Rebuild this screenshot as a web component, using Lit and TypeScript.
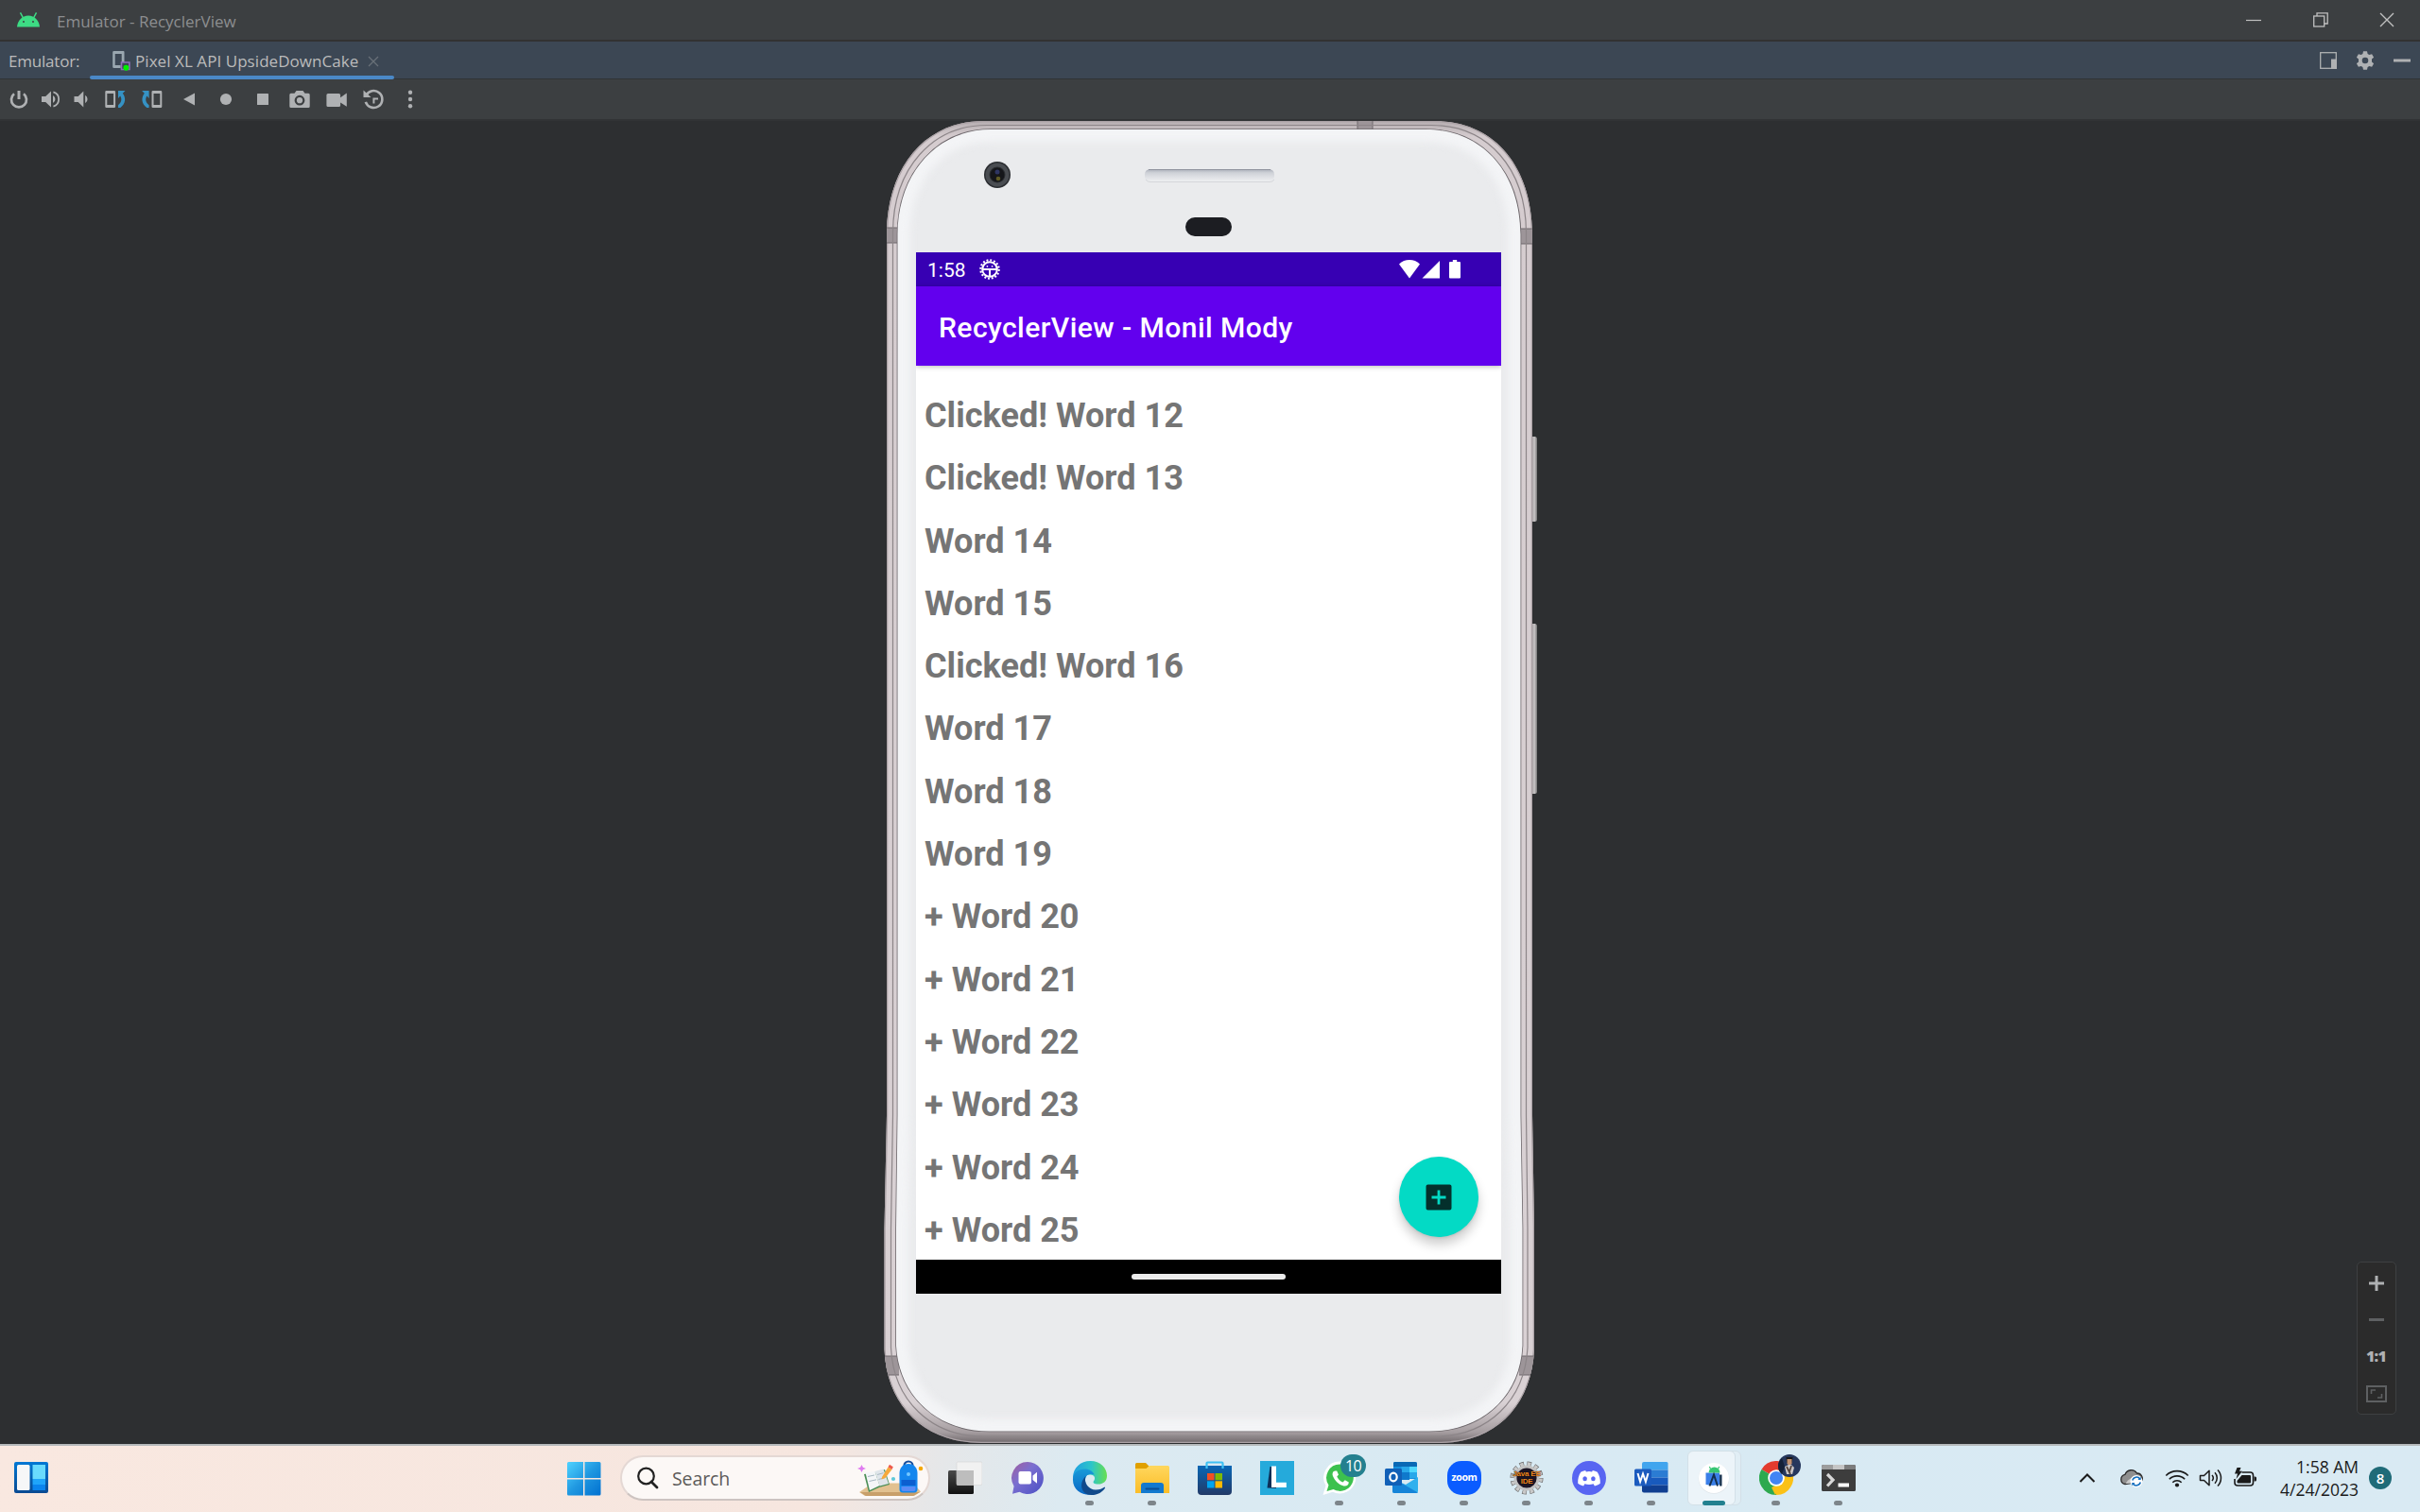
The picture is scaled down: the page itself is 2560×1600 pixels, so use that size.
import { LitElement, html, css, svg, TemplateResult } from "lit";
import { customElement, property } from "lit/decorators.js";

/** Wraps svg content in a box with its own coordinate system. */
const icon = (w: number, h: number, body: unknown) =>
  html`<svg width=${w} height=${h} viewBox="0 0 ${w} ${h}" fill="none">${body}</svg>`;

const G = "#afb1b3";
const BLUE = "#3592c4";

/* ---------- emulator toolbar ---------- */
const power = icon(24, 24, svg`<path d="M7 6.2a8 8 0 1 0 10 0" stroke=${G} stroke-width="2.7"/><path d="M12 3v9" stroke=${G} stroke-width="3"/>`);
const volUp = icon(24, 24, svg`<path d="M3 9h4.200l5.800-5.400v16.800L7.200 15H3z" fill=${G}/><path d="M15 8a4.500 4.500 0 0 1 0 8z" fill=${G}/><path d="M15.400 4.400a7.900 7.900 0 0 1 0 15.200" stroke=${G} stroke-width="1.800"/>`);
const volDown = icon(24, 24, svg`<path d="M4.500 9h4.200l5.600-5.600v17.200L8.700 15H4.500z" fill=${G}/><path d="M16.100 7.800a4.800 4.800 0 0 1 0 8.400z" fill=${G}/>`);
const rotLeft = icon(24, 24, svg`<path fill-rule="evenodd" d="M2.500 3h8.400a1.200 1.200 0 0 1 1.200 1.200v15.600a1.200 1.200 0 0 1-1.200 1.200H2.500a1.200 1.200 0 0 1-1.200-1.200V4.200A1.200 1.200 0 0 1 2.500 3zM3.300 6v12h6.800V6z" fill=${G}/><path d="M15 3h7.500l-2.700 2.800c3.600 4.400 3.300 11-2.500 15.200H15v-2.800c3.600-2.800 4.200-6.700 2.200-9.700L15 11z" fill=${BLUE}/>`);
const rotRight = icon(24, 24, svg`<g transform="translate(23.600 0) scale(-1 1)"><path fill-rule="evenodd" d="M2.500 3h8.400a1.200 1.200 0 0 1 1.200 1.200v15.600a1.200 1.200 0 0 1-1.200 1.200H2.500a1.200 1.200 0 0 1-1.200-1.200V4.200A1.200 1.200 0 0 1 2.500 3zM3.300 6v12h6.800V6z" fill=${G}/><path d="M15 3h7.500l-2.700 2.800c3.600 4.400 3.300 11-2.500 15.200H15v-2.800c3.600-2.800 4.200-6.700 2.200-9.700L15 11z" fill=${BLUE}/></g>`);
const back = icon(24, 24, svg`<path d="M6 12 18 5.500v13z" fill=${G}/>`);
const home = icon(24, 24, svg`<circle cx="12" cy="12" r="6.100" fill=${G}/>`);
const overview = icon(24, 24, svg`<rect x="6" y="6" width="12" height="12" rx=".6" fill=${G}/>`);
const camera = icon(24, 24, svg`<path fill-rule="evenodd" d="M8.500 3h7l2 2.800h3.700a1.500 1.500 0 0 1 1.500 1.500v12.200A1.500 1.500 0 0 1 21.200 21H2.800a1.500 1.500 0 0 1-1.500-1.500V7.300a1.500 1.500 0 0 1 1.500-1.500h3.700zM12 7.800a5.400 5.400 0 1 0 0 10.800 5.400 5.400 0 0 0 0-10.800z" fill=${G}/><circle cx="12" cy="13.200" r="3.100" fill=${G}/>`);
const video = icon(24, 24, svg`<path d="M3 6h11.500a1.600 1.600 0 0 1 1.600 1.600v2.600L22.800 5.400v14.400l-6.700-4.400v3a1.600 1.600 0 0 1-1.600 1.600H3a1.600 1.600 0 0 1-1.600-1.600V7.600A1.600 1.600 0 0 1 3 6z" fill=${G}/>`);
const replay = icon(24, 24, svg`<path d="M4.200 8.200a9 9 0 1 1-.4 6.600" stroke=${G} stroke-width="2.600"/><path d="M1.500 2.500V10h8z" fill=${G}/><path d="M17 11.500h-4.600v5" stroke=${G} stroke-width="2"/>`);
const kebab = icon(24, 24, svg`${[4.7, 12, 19.3].map((y) => svg`<circle cx="12" cy=${y} r="2.200" fill=${G}/>`)}`);

/* ---------- window chrome ---------- */
const androidHead = icon(26, 18, svg`<path d="M1 16.500C1.600 9.500 6.500 4.500 13 4.500s11.400 5 12 12z" fill="#3ddc84"/><path d="m7.500 7-3-5.600M18.500 7l3-5.600" stroke="#3ddc84" stroke-width="1.500"/><circle cx="8" cy="11" r="1" fill="#3c3f41"/><circle cx="18" cy="11" r="1" fill="#3c3f41"/>`);
const deviceIcon = icon(20, 22, svg`<path fill-rule="evenodd" d="M1.500 1h10a1 1 0 0 1 1 1v11H9.700V4H2.700v12h6v3H1.500a1.300 1.300 0 0 1-1.300-1.300V2.200A1.300 1.300 0 0 1 1.500 1z" fill="#9aa7b0"/><path d="M9.500 13h8.400v7.500H9.500z" stroke="#8f6fb8" stroke-width="1.600"/><circle cx="14.400" cy="18.800" r="3" fill="#00f000"/>`);
const closeTab = icon(12, 12, svg`<path d="m1 1 10 10M11 1 1 11" stroke="#697078" stroke-width="1.300"/>`);
const winMin = icon(16, 16, svg`<path d="M0 8.500h16" stroke="#c0c0c0" stroke-width="1.200"/>`);
const winMax = icon(16, 16, svg`<rect x=".7" y="4" width="11" height="11" stroke="#c0c0c0" stroke-width="1.300"/><path d="M4 4V.9h11.200V12H12" stroke="#c0c0c0" stroke-width="1.300"/>`);
const winClose = icon(16, 16, svg`<path d="m1 1 14 14M15 1 1 15" stroke="#c0c0c0" stroke-width="1.400"/>`);
const paneMode = icon(18, 18, svg`<rect x=".7" y=".7" width="16.600" height="16.600" stroke=${G} stroke-width="1.300"/><path d="M12 7.500h6V18h-6z" fill=${G}/>`);
const gear = icon(20, 20, svg`<path fill-rule="evenodd" d="m8 .3h4l.6 2.800 1.700 1 2.800-.9 2 3.500-2.100 1.900v2.800l2.100 1.900-2 3.500-2.800-.9-1.700 1-.6 2.800H8l-.6-2.800-1.700-1-2.800.9-2-3.500L3 11.400V8.600L.9 6.700l2-3.500 2.800.9 1.700-1zM10 6.700a3.300 3.300 0 1 0 0 6.600 3.300 3.300 0 0 0 0-6.600z" fill=${G}/>`);
const hide = icon(18, 18, svg`<path d="M0 9h18" stroke=${G} stroke-width="3"/>`);

/* ---------- zoom panel ---------- */
const zoomIn = icon(16, 16, svg`<path d="M8 0v16M0 8h16" stroke=${G} stroke-width="3"/>`);
const zoomOut = icon(16, 16, svg`<path d="M0 8.500h16" stroke="#5e6062" stroke-width="3"/>`);
const zoomFit = icon(22, 18, svg`<rect x="1" y="1" width="20" height="16" stroke="#5e6062" stroke-width="2"/><path d="M5.500 9V5h4.500M16.500 9v4H12" stroke="#5e6062" stroke-width="1.600"/>`);

/* ---------- taskbar ---------- */
const widgets = icon(36, 34, svg`<defs><linearGradient id="wg" x1="0" y1="0" x2="0" y2="1"><stop stop-color="#0078d4"/><stop offset="1" stop-color="#0a4a92"/></linearGradient></defs><rect width="36" height="33" rx="2" fill="url(#wg)"/><rect x="3" y="3" width="13.500" height="27" rx="1.500" fill="#f6f7f8"/><path d="M19.500 3H33v15H19.500z" fill="#6adbfd"/><path d="M19.500 18H33v6H19.500z" fill="#1fa5fb"/><path d="M19.500 24H33v6H19.500z" fill="#0a84ee"/>`);
const start = icon(36, 36, svg`<defs><linearGradient id="st" gradientUnits="userSpaceOnUse" x1="0" y1="0" x2="36" y2="36"><stop stop-color="#4fd2ff"/><stop offset=".5" stop-color="#1f97e0"/><stop offset="1" stop-color="#006fd0"/></linearGradient></defs><path d="M1.500 0H17v17H0V1.500A1.500 1.500 0 0 1 1.500 0zM18.500 0H34A1.500 1.500 0 0 1 35.500 1.500V17h-17zM0 18.500h17v17H1.500A1.500 1.500 0 0 1 0 34zM18.500 18.500h17V34a1.500 1.500 0 0 1-1.500 1.500H18.500z" fill="url(#st)"/>`);
const magnifier = icon(24, 24, svg`<circle cx="10.500" cy="10" r="8.300" stroke="#222" stroke-width="2.200"/><path d="m16 16 6 6" stroke="#222" stroke-width="2.800" stroke-linecap="round"/>`);
const doodle = icon(70, 38, svg`<path d="M2 34 16 24.500h43l8 9-7 4.500H8z" fill="#e2c190"/><path d="M3 34h63l-7 4H9z" fill="#c89f6a"/><path d="m4.500 5 1.400 2.700L9 9l-3.100 1.300L4.500 13l-1.400-2.700L0 9l3.100-1.300z" fill="#e07bf0"/><path d="m7 15 11-2 11-3 5 16-11 3-11 5z" fill="#4c8f57"/><path d="m8.500 13.500 10-1.500 5 15-10.500 5z" fill="#f4f6f8"/><path d="m18.500 12 9-2.500 5.500 15.500-9.500 2.500z" fill="#dfe5ea"/><path d="m11 17.500 7-1.500M12.500 22.500l7.500-1.700M21 15.500l6.500-1.800M22.500 20.500l6.500-1.800" stroke="#a7b8c2"/><path d="M26 18 32.500 7.500l4 2.500L29.500 19l-4 1.500z" fill="#f6a93b"/><path d="m32.500 7.500 1.500-2.800 3.800 2.600L36.500 10z" fill="#ee5a4a"/><circle cx="38" cy="20" r="2.100" fill="#5fc9d8"/><circle cx="67" cy="9" r="2.300" fill="#f5a800"/><path d="M49.500 6a4.500 4.500 0 0 1 9 0" stroke="#174f9e" stroke-width="2.200"/><path d="M44.500 14c0-6 4-10 9.500-10s9.500 4 9.500 10v17c0 2-1 3.500-3.500 3.500H48c-2.500 0-3.500-1.500-3.500-3.500z" fill="#1486ee"/><path d="M46.500 21h15v6h-15z" fill="#0b5fd0"/><path d="M46.500 28h15v3a2 2 0 0 1-2 2h-11a2 2 0 0 1-2-2z" fill="#5b8cf6"/><circle cx="54" cy="15" r="2" fill="#73c8ff"/>`);
const taskView = icon(36, 36, svg`<defs><linearGradient id="tv" x1="0" y1="0" x2="0" y2="1"><stop stop-color="#4a4a4a"/><stop offset="1" stop-color="#111"/></linearGradient></defs><rect x="0" y="10" width="27" height="25" rx="1.500" fill="url(#tv)"/><rect x="9" y="1" width="27" height="24.500" rx="1.500" fill="#f1f1f1" stroke="#d5d5d5" stroke-width=".6"/><path d="M9 10h18v15.500H9z" fill="#bdbdbd"/>`);
const chat = icon(36, 36, svg`<defs><linearGradient id="ch" x1="0" y1="0" x2="1" y2="1"><stop stop-color="#a25e9e"/><stop offset=".4" stop-color="#7b6fd0"/><stop offset="1" stop-color="#4a4fc4"/></linearGradient></defs><path d="M18 1a17 17 0 1 1-8.500 31.800L2 34.800l1.600-8A17 17 0 0 1 18 1z" fill="url(#ch)"/><rect x="8.500" y="11" width="13.500" height="13.500" rx="2" fill="#fff"/><path d="m23.500 15.500 4.500-3.700v12l-4.500-3.700z" fill="#fff"/>`);
const edge = icon(38, 38, svg`<defs><linearGradient id="e1" x1="0" y1=".3" x2="1" y2=".3"><stop stop-color="#1f9fe2"/><stop offset=".55" stop-color="#2cc5c9"/><stop offset="1" stop-color="#68df4f"/></linearGradient><linearGradient id="e2" x1="0" y1="0" x2="0" y2="1"><stop stop-color="#189ad8"/><stop offset="1" stop-color="#0a67c5"/></linearGradient></defs><path d="M1 19C1 8 9 1 19.500 1 30 1 37 8.500 37 16.500c0 6.500-4.500 9-9 9-4.800 0-6.300-1.700-5-3.300 2-2.300 1.500-6.700-4-6.700z" fill="url(#e1)"/><path d="M1 19.500C1.500 13 7 9.500 13.500 9.500c5 0 8.500 2.600 10.200 6-7-2.500-9.700 2-9.700 6.500 0 8 8 14 14.500 12C18 40.500 0 35.500 1 19.500z" fill="url(#e2)"/><path d="M14.500 17c-2.500 7 3.500 14.500 10.500 14.500 4.500 0 7-1.200 9.200-2.700.7-.4 1.100.2.700.9-2.500 4-7.500 7.300-14.400 7.300C10 37 6.500 25 14.500 17z" fill="#114a8b"/>`);
const explorer = icon(38, 36, svg`<defs><linearGradient id="fx" x1="0" y1="0" x2="0" y2="1"><stop stop-color="#ffd75e"/><stop offset="1" stop-color="#fbbd27"/></linearGradient></defs><path d="M1 3.500A1.500 1.500 0 0 1 2.500 2H12l3.500 3.500V11H1z" fill="#e0a000"/><path d="M1 8h11.500L16 5h19.500A1.500 1.500 0 0 1 37 6.500V34H1z" fill="url(#fx)"/><path d="M7 34v-8a3 3 0 0 1 3-3h18a3 3 0 0 1 3 3v8z" fill="#1379cf"/><path d="M12.500 29.500h13" stroke="#0b4f94" stroke-width="2" stroke-linecap="round"/>`);
const store = icon(36, 36, svg`<defs><linearGradient id="ms" x1="0" y1="0" x2="0" y2="1"><stop stop-color="#0967b5"/><stop offset="1" stop-color="#223a68"/></linearGradient></defs><path d="M0 5h36v27a4 4 0 0 1-4 4H4a4 4 0 0 1-4-4z" fill="url(#ms)"/><path d="M9.500 8V2.500a1 1 0 0 1 1-1h15a1 1 0 0 1 1 1V8" stroke="#3ec1f3" stroke-width="2.200"/><path d="M10 13h7.500v7.300H10z" fill="#f25022"/><path d="M18.500 13H26v7.300h-7.500z" fill="#7fba00"/><path d="M10 21.300h7.500v7.200H10z" fill="#00a4ef"/><path d="M18.500 21.300H26v7.200h-7.500z" fill="#ffb900"/>`);
const lApp = icon(36, 36, svg`<path d="M0 0h36v36H0z" fill="#25aadb"/><path d="m10.500 6-3 22.500 9.500.5V6z" fill="#0d2f57"/><path d="M12 5.500h5v17.300h10.800V28H12z" fill="#fff"/>`);
const whatsapp = icon(36, 36, svg`<path d="M18.500.5a17 17 0 1 1-7.700 32.300L.5 36l3-10A17 17 0 0 1 18.500.5z" fill="#fff"/><path d="M18.500 3.500a14.200 14.200 0 1 1-7 26.500l-7 2 2-6.500a14.200 14.200 0 0 1 12-22z" fill="#3cc14e"/><path d="M13.500 10.500c-2.500 0-3.500 3-2.500 5.500 2 5 6 9 11.500 10.500 3 .6 5.300-1.200 5.300-4l-4-2.300-2.300 2.300c-3-1.200-5.200-3.500-6.200-6l1.700-2-1.800-4z" fill="#fff"/>`);
const outlook = icon(36, 34, svg`<path d="M9 2a2 2 0 0 1 2-2h21a2 2 0 0 1 2 2v16H9z" fill="#1490df"/><path d="M10 0h22a2 2 0 0 1 2 2v3H9V1z" fill="#0a69b5"/><path d="M17.500 5H26v6h-8.500z" fill="#28a8ea"/><path d="M26 5h8v6h-8z" fill="#50d9ff"/><path d="M17.500 11H26v8h-8.500z" fill="#0f79cc"/><path d="M26 11h8v6h-8z" fill="#28a8ea"/><path d="M8 18 22 24l13-8v15a2 2 0 0 1-2 2H10a2 2 0 0 1-2-2z" fill="#2fb0ee"/><path d="m8 17 27 15.500c-.5.300-1 .5-2 .5H10a2 2 0 0 1-2-2z" fill="#1584d8"/><rect x="0" y="7" width="18" height="18" rx="1.500" fill="#1160b7"/><ellipse cx="9" cy="16" rx="3.700" ry="4.300" stroke="#fff" stroke-width="2.200"/>`);
const zoomApp = html`<span class="zoom">zoom</span>`;
const javaEE = html`<span class="java">${icon(36, 36, svg`<circle cx="18" cy="18" r="14.800" stroke="#6a6a6a" stroke-width="5.400" stroke-dasharray="4.400 3.350"/><circle cx="18" cy="18" r="14.800" stroke="#c9c9c9" stroke-width="4" stroke-dasharray="3.400 4.350" stroke-dashoffset="-.5"/><circle cx="18" cy="18" r="12" fill="#1c1524" stroke="#c2c2c2" stroke-width="2.800"/>`)}<b>Java EE<br />IDE</b></span>`;
const discord = icon(36, 36, svg`<circle cx="18" cy="18" r="18" fill="#5865f2"/><path fill-rule="evenodd" d="M14.200 10c-1.800.3-3.500.9-5 1.800-2.300 3.700-3.200 7.700-3 12 2 1.500 3.900 2.300 5.900 2.700l1.300-2.200c2.900 1 6.300 1 9.200 0l1.300 2.200c2-.4 3.900-1.200 5.900-2.700.2-4.300-.7-8.300-3-12-1.500-.9-3.200-1.500-5-1.800l-.7 1.400a16 16 0 0 0-6.200 0zM13.600 16.200a2.300 2.500 0 1 1 0 5 2.300 2.500 0 0 1 0-5zm8.800 0a2.300 2.500 0 1 1 0 5 2.300 2.500 0 0 1 0-5z" fill="#fff"/>`);
const word = icon(36, 34, svg`<path d="M8 2a2 2 0 0 1 2-2h24a1.500 1.500 0 0 1 1.500 1.500V8.500H8z" fill="#41a5ee"/><path d="M8 8.500h27.500v8H8z" fill="#2b7cd3"/><path d="M8 16.500h27.500v8H8z" fill="#185abd"/><path d="M8 24.500h27.500V31a1.500 1.500 0 0 1-1.500 1.500H10a2 2 0 0 1-2-2z" fill="#103f91"/><rect x="0" y="7.500" width="18" height="18" rx="1.500" fill="#1b5bbe"/><path d="m3.500 12 2.600 9L9 12.500l2.900 8.500 2.600-9" stroke="#fff" stroke-width="2"/>`);
const studio = icon(36, 36, svg`<circle cx="18" cy="18.500" r="16.300" fill="#dfe6ea"/><circle cx="18" cy="18" r="16" fill="#fff"/><path d="M9.500 12.500h14.500V25l-7 1-7.500-1z" fill="#3a7fe8"/><path d="M12.500 12.500a6 6 0 0 1 12 0z" fill="#36c673"/><path d="m14.500 8-1.200-2M22.500 8l1.200-2" stroke="#36c673" stroke-width="1.200"/><path d="m13.500 26.500 4.500-12 4 12" stroke="#14304f" stroke-width="2"/><path d="M25.300 14.500v12" stroke="#14304f" stroke-width="2.400"/>`);
const chrome = icon(36, 36, svg`<path d="M18 18 2.400 9A18 18 0 0 1 33.600 9z" fill="#e33b2e"/><path d="M18 18 33.600 9A18 18 0 0 1 18 36z" fill="#fbc116"/><path d="M18 18v18A18 18 0 0 1 2.400 9z" fill="#2da94f"/><path d="M18 9.500h15.800l-8 13.500zM25.500 22 17 36l-4-8z" fill="#fbc116"/><path d="M18 9.500h15.800a18 18 0 0 0-3-4z" fill="#e33b2e"/><circle cx="18" cy="18" r="8.800" fill="#fff"/><circle cx="18" cy="18" r="7" fill="#4285f4"/>`);
const avatar = icon(24, 24, svg`<circle cx="12" cy="12" r="12" fill="#26375c"/><path d="M0 12a12 12 0 0 0 4 9l3-8-3-9A12 12 0 0 0 0 12z" fill="#142038"/><path d="M8.500 3h7l-1 6H9z" fill="#1b1716"/><path d="M9.500 5h5v5L12 12l-2.500-2z" fill="#c29272"/><path d="M7 13l4-2h3l3 3-2 7H9z" fill="#c9c5c6"/><path d="m9 13 4 8M14 12l-2 6" stroke="#55453f" stroke-width="1.800"/>`);
const terminal = icon(36, 28, svg`<path d="M0 2a2 2 0 0 1 2-2h32a2 2 0 0 1 2 2v24.500A1.500 1.500 0 0 1 34.500 28h-33A1.500 1.500 0 0 1 0 26.500z" fill="#3d3d3d"/><path d="M0 5V2a2 2 0 0 1 2-2h10v5z" fill="#9d9d9d"/><path d="M12 0h12v5H12z" fill="#c5c5c5"/><path d="M24 0h10a2 2 0 0 1 2 2v3H24z" fill="#7c7c7c"/><path d="m6 10 6 6-6 6.500" stroke="#d8d8d8" stroke-width="3.200"/><path d="M17.500 19.500h11.500v4H17.500z" fill="#fff"/>`);

/* ---------- tray ---------- */
const chevron = icon(18, 12, svg`<path d="m1.500 10 7.500-7.500 7.500 7.500" stroke="#1a1a1a" stroke-width="2"/>`);
const cloud = icon(26, 22, svg`<path d="M6 17.500A5.200 5.200 0 0 1 6 7.300 7 7 0 0 1 18.500 6a5.500 5.500 0 0 1 4.500 9z" fill="#8f8f8f" stroke="#2a2a2a" stroke-width="1.300"/><path d="M6.500 17C10 11 15 9.500 22 9v7z" fill="#c9c9c9"/><circle cx="18" cy="14.500" r="6.500" fill="#fff"/><path d="M13.800 13.500a4.500 4.500 0 0 1 8-1.500M22.300 15.500a4.500 4.500 0 0 1-8 1.500" stroke="#0f6cbd" stroke-width="1.500"/><path d="M22.700 9.800v3.200h-3.200zM13.300 19.200V16h3.200z" fill="#0f6cbd"/>`);
const wifi = icon(26, 20, svg`<path d="M1.300 7.500a16.500 16.500 0 0 1 23.400 0M4.800 11.300a11.500 11.500 0 0 1 16.400 0M8.300 14.700a6.600 6.600 0 0 1 9.400 0" stroke="#1a1a1a" stroke-width="1.600"/><circle cx="13" cy="17.500" r="2.100" fill="#1a1a1a"/>`);
const volume = icon(26, 20, svg`<path d="M1.500 7.500h4L11 2.200v15.600L5.500 12.500h-4z" stroke="#1a1a1a" stroke-width="1.500" stroke-linejoin="round"/><path d="M14 7a4.500 4.500 0 0 1 0 6M17 4.200a8.500 8.500 0 0 1 0 11.600M20 1.400a12.400 12.400 0 0 1 0 17.200" stroke="#1a1a1a" stroke-width="1.500"/>`);
const battery = icon(26, 22, svg`<path d="M9.500 5h9a3 3 0 0 1 3 3v8a3 3 0 0 1-3 3H5a3 3 0 0 1-3-3v-4" stroke="#1a1a1a" stroke-width="1.600"/><path d="M22.500 9.500h1a1.500 1.500 0 0 1 1.500 1.500v2a1.500 1.500 0 0 1-1.500 1.500h-1z" fill="#1a1a1a"/><path d="m9.500 8h8.500a1 1 0 0 1 1 1v6.500a1 1 0 0 1-1 1H5.500a1 1 0 0 1-1-1V14z" fill="#1a1a1a"/><path d="M4.500 0h4L7 3.800h3L3.500 12 5 6.500H2z" fill="#1a1a1a"/>`);

/* ---------- phone ---------- */
const OUTER =
  "M1040 128H1518C1580 128 1620 175 1621 246V1180L1623 1300V1428C1620 1490 1580 1527 1522 1527H1038C980 1527 938 1490 935.5 1428V1300L938 1180V246C939 175 980 128 1040 128Z";
const RIM =
  "M1044 132.500H1514C1574 132.500 1614 178 1614.500 246V1180L1616 1300V1426C1613 1482 1574 1520 1518 1520H1040C985 1520 945 1482 942.500 1426V1300L944.500 1180V246C945 178 986 132.500 1044 132.500Z";
const FACE =
  "M1048 137H1508C1568 137 1608 182 1608.500 248V1180L1610.500 1300V1424C1608 1478 1568 1514.500 1512 1514.500H1046C992 1514.500 951 1478 948 1424V1300L949.500 1180V248C950 182 992 137 1048 137Z";

const phoneBody = html`<svg class="body" width="700" height="1400" viewBox="930 128 700 1400" fill="none">
  <defs>
    <linearGradient id="metal" x1="0" y1="0" x2="0" y2="1">
      <stop stop-color="#b5adb0" />
      <stop offset=".012" stop-color="#d5cccf" />
      <stop offset=".97" stop-color="#d9d1d4" />
      <stop offset=".992" stop-color="#a59da0" />
      <stop offset="1" stop-color="#6f686b" />
    </linearGradient>
    <linearGradient id="key" x1="0" y1="0" x2="1" y2="0">
      <stop stop-color="#8b8487" />
      <stop offset=".6" stop-color="#c9c6c7" />
      <stop offset="1" stop-color="#777" />
    </linearGradient>
    <linearGradient id="grille" x1="0" y1="0" x2="0" y2="1">
      <stop stop-color="#a9adb8" />
      <stop offset=".3" stop-color="#cfd2d8" />
      <stop offset="1" stop-color="#eeeff1" />
    </linearGradient>
    <filter id="soft" x="-5%" y="-5%" width="110%" height="110%" color-interpolation-filters="sRGB"><feGaussianBlur stdDeviation="4.500" /></filter>
    <clipPath id="face"><path d=${FACE} /></clipPath>
    <clipPath id="outer"><path d=${OUTER} /></clipPath>
  </defs>
  <rect x="1619" y="462" width="7" height="90" rx="2.500" fill="url(#key)" />
  <rect x="1619" y="660" width="7" height="180" rx="2.500" fill="url(#key)" />
  <path d=${OUTER} fill="url(#metal)" />
  <g clip-path="url(#outer)">
    <path d=${OUTER} stroke="#aba2a6" stroke-width="2.500" />
    <path d="M936 241h14v16h-14zM1608 242h15v16h-15zM1436 128h16v9h-16zM934 1435h17v20h-17zM1607 1435h18v20h-18z" fill="#9d9599" />
    <path d="M936 241h14M936 257h14M1608 242h15M1608 258h15M1436 128v9M1452 128v9M934 1435h17M934 1455h17M1607 1435h18M1607 1455h18" stroke="#6f686c" />
  </g>
  <path d=${RIM} stroke="#8c8588" stroke-width="1.200" />
  <path d=${FACE} fill="#eaebed" stroke="#6f696d" stroke-width="1.600" />
  <g clip-path="url(#face)">
    <path d=${FACE} stroke="#f3f4f6" stroke-width="26" filter="url(#soft)" />
  </g>
  <circle cx="1055" cy="185" r="14" fill="#2b2d31" />
  <circle cx="1055" cy="185" r="10.500" stroke="#4a4d52" stroke-width="4" />
  <circle cx="1055" cy="185" r="7.500" fill="#15161a" />
  <circle cx="1055" cy="182" r="2.500" fill="#2e3563" />
  <circle cx="1056" cy="189" r="2.300" fill="#5f5a24" />
  <rect x="1211" y="179" width="137" height="13" rx="5.500" fill="url(#grille)" />
  <path d="M1212 190a6 6 0 0 0 5 2.500h126a6 6 0 0 0 5-2.500" stroke="#d4d6da" stroke-width="1" />
  <path d="M1215 179.500h129" stroke="#8f939e" stroke-width="1.200" />
  <rect x="1254" y="230" width="49" height="20" rx="10" fill="#1c1d22" />
</svg>`;

const debugIcon = icon(22, 22, svg`<circle cx="11" cy="11" r="7.800" stroke="#fff" stroke-width="2"/><circle cx="11" cy="11" r="9.700" stroke="#fff" stroke-width="2.200" stroke-dasharray="1.900 1.909"/><path d="M3 11h16M11 11v8" stroke="#fff" stroke-width="2"/><circle cx="8.400" cy="7.800" r=".9" fill="#fff"/><circle cx="13.600" cy="7.800" r=".9" fill="#fff"/>`);
const statusWifi = icon(24, 20, svg`<path d="M1 4.500a16 16 0 0 1 22 0L12 19.500z" fill="#fff"/>`);
const statusCell = icon(20, 20, svg`<path d="M.5 19.500 19 1v18.500z" fill="#fff"/>`);
const statusBattery = icon(12, 20, svg`<path d="M3.800 0h4.400v2H11a1 1 0 0 1 1 1v15.500a1 1 0 0 1-1 1H1a1 1 0 0 1-1-1V3a1 1 0 0 1 1-1h2.800z" fill="#fff"/>`);
const addBox = icon(28, 28, svg`<path fill-rule="evenodd" d="M2.500.5h23a2 2 0 0 1 2 2v23a2 2 0 0 1-2 2h-23a2 2 0 0 1-2-2v-23a2 2 0 0 1 2-2zM12.600 6.500v6.100H6.500v2.800h6.100v6.100h2.800v-6.100h6.100v-2.800h-6.100V6.500z" fill="#04302c"/>`);

@customElement("phone-view")
class PhoneView extends LitElement {
  @property({ attribute: false }) words: string[] = [];

  static styles = css`
    :host { display: block; width: 700px; height: 1400px; position: relative; }
    * { box-sizing: border-box; }
    svg { display: block; }
    .body { position: absolute; left: 0; top: 0; }
    .screen {
      position: relative; margin: 139px 0 0 39px; width: 619px; height: 1102px; background: #fff;
      display: flex; flex-direction: column; font-family: Roboto, sans-serif; overflow: hidden;
    }
    .status {
      height: 36px; background: #3700b3; color: #fff; display: flex; align-items: center;
      padding: 1px 43px 1px 12px; font-size: 21px; flex: none;
    }
    .status .bug { margin-left: 14px; }
    .status .time { padding-top: 1px; }
    .status .right { margin-left: auto; display: flex; align-items: center; }
    .cell { margin-left: 1px; }
    .batt { margin-left: 9px; }
    .bar {
      height: 84px; background: #6200ee; color: #fff; font-size: 30.1px; font-weight: 500; letter-spacing: 0.42px; flex: none;
      display: flex; align-items: center; padding: 2px 0 0 24px; box-shadow: 0 1px 5px rgba(0, 0, 0, 0.28);
      position: relative; z-index: 1;
    }
    ul { list-style: none; margin: 0; padding: 20px 0 0 9px; flex: 1; min-height: 0; overflow: hidden; }
    li { height: 66.3px; line-height: 66.3px; font-size: 36.1px; font-weight: 700; color: #757575; white-space: nowrap; }
    .nav { height: 36px; background: #000; display: flex; align-items: center; justify-content: center; flex: none; }
    .pill { width: 163px; height: 6px; border-radius: 3px; background: #ebebeb; }
    .fab {
      position: absolute; right: 24px; bottom: 60px; width: 84px; height: 85px; border-radius: 50%;
      background: #03dac5; display: flex; align-items: center; justify-content: center;
      box-shadow: 0 8px 12px rgba(0, 0, 0, 0.2), 0 1px 3px rgba(0, 0, 0, 0.1);
    }
  `;

  render() {
    return html`${phoneBody}
      <div class="screen">
        <div class="status">
          <span class="time">1:58</span><span class="bug">${debugIcon}</span>
          <span class="right">${statusWifi}<span class="cell">${statusCell}</span><span class="batt">${statusBattery}</span></span>
        </div>
        <div class="bar">RecyclerView - Monil Mody</div>
        <ul>${this.words.map((w) => html`<li>${w}</li>`)}</ul>
        <div class="nav"><div class="pill"></div></div>
        <div class="fab">${addBox}</div>
      </div>`;
  }
}

type App = { art: TemplateResult; open?: boolean; active?: boolean; badge?: string; face?: boolean };

@customElement("task-bar")
class TaskBar extends LitElement {
  static styles = css`
    :host {
      display: flex; height: 72px; border-top: 2px solid #b6babc; box-sizing: border-box; position: relative;
      font-family: "Open Sans", "Noto Sans", sans-serif;
      background: linear-gradient(102deg, #f9e8e0 0%, #f6e6df 34%, #e5e7e9 39%, #dceaf1 44%, #d8eaf3 60%, #d9eaf3 100%);
    }
    * { box-sizing: border-box; }
    svg { display: block; }
    .widgets { width: 600px; padding: 17px 0 0 15px; }
    .start { width: 56px; padding-top: 17px; }
    .search {
      width: 328px; height: 48px; margin-top: 10px; border-radius: 24px; background: #fcf8f6;
      border: 2px solid #e4d8d4; border-bottom-color: #cdc4c1; display: flex; align-items: center; padding: 0 5px 0 15px;
    }
    .search .label { margin-left: 14px; font-size: 19.5px; color: #5d5b5a; letter-spacing: -0.1px; }
    .search .doodle { margin-left: auto; }
    .apps { display: flex; margin-left: 4px; }
    .app { width: 66px; height: 70px; position: relative; display: flex; align-items: center; justify-content: center; padding-bottom: 2px; }
    .app.open::after {
      content: ""; position: absolute; left: 28px; top: 58px; width: 9px; height: 5px; border-radius: 3px; background: #7d858a;
    }
    .app.active::after { left: 21px; width: 24px; background: #22808f; }
    .tile { position: absolute; left: 5px; top: 5px; width: 51px; height: 58px; border-radius: 6px; background: #ecf4f9; border: 1px solid #d3e0e8; }
    .tile.under { left: 11px; background: #e1eef5; }
    .art { position: relative; }
    .badge {
      position: absolute; left: 34px; top: 9px; width: 27px; height: 24px; border-radius: 12px; background: #24808f;
      color: #fff; font-size: 16px; display: flex; align-items: center; justify-content: center; letter-spacing: -0.6px;
    }
    .face { position: absolute; left: 35px; top: 9px; }
    .zoom {
      width: 36px; height: 36px; border-radius: 15px; background: #0b5cff; color: #fff; font-size: 10.5px; font-weight: 700;
      display: flex; align-items: center; justify-content: center; padding-bottom: 2px; letter-spacing: -0.3px;
    }
    .java { display: block; position: relative; }
    .java b {
      position: absolute; left: -4px; right: -4px; top: 10px; text-align: center; font-size: 8px; line-height: 7.5px; color: #f08a24;
      white-space: nowrap; font-weight: 700; font-family: "Liberation Sans", sans-serif; letter-spacing: -0.2px; text-shadow: 0 0 1px #000, 0 0 1px #000;
    }
    .tray { margin-left: auto; display: flex; align-items: center; padding: 0 30px 2px 0; color: #1a1a1a; }
    .tray > * { flex: none; }
    .cloud { margin-left: 25.5px; }
    .wifi { margin-left: 22px; }
    .vol { margin-left: 10px; }
    .bat { margin-left: 10px; }
    .clock { width: 107px; text-align: right; font-size: 17.5px; line-height: 24px; letter-spacing: 0; white-space: nowrap; }
    .count {
      margin-left: 11px; width: 24px; height: 24px; border-radius: 50%; background: #1f6b78; color: #fff; font-size: 15px;
      font-weight: 600; display: flex; align-items: center; justify-content: center;
    }
  `;

  private apps: App[] = [
    { art: taskView },
    { art: chat },
    { art: edge, open: true },
    { art: explorer, open: true },
    { art: store },
    { art: lApp },
    { art: whatsapp, open: true, badge: "10" },
    { art: outlook, open: true },
    { art: zoomApp, open: true },
    { art: javaEE, open: true },
    { art: discord, open: true },
    { art: word, open: true },
    { art: studio, open: true, active: true },
    { art: chrome, open: true, face: true },
    { art: terminal, open: true },
  ];

  render() {
    return html`
      <div class="widgets">${widgets}</div>
      <div class="start">${start}</div>
      <div class="search">${magnifier}<span class="label">Search</span><span class="doodle">${doodle}</span></div>
      <div class="apps">
        ${this.apps.map(
          (a) => html`<div class="app ${a.open ? "open" : ""} ${a.active ? "active" : ""}">
            ${a.active ? html`<i class="tile under"></i><i class="tile"></i>` : ""}
            <span class="art">${a.art}</span>
            ${a.badge ? html`<span class="badge">${a.badge}</span>` : ""}
            ${a.face ? html`<span class="face">${avatar}</span>` : ""}
          </div>`
        )}
      </div>
      <div class="tray">
        ${chevron}<span class="cloud">${cloud}</span><span class="wifi">${wifi}</span><span class="vol">${volume}</span
        ><span class="bat">${battery}</span>
        <div class="clock">1:58 AM<br />4/24/2023</div>
        <span class="count">8</span>
      </div>
    `;
  }
}

@customElement("app-root")
class AppRoot extends LitElement {
  static styles = css`
    :host {
      display: flex; flex-direction: column; width: 2560px; height: 1600px; overflow: hidden; background: #2d2f31;
      font-family: "Open Sans", "Noto Sans", sans-serif; color: #bbb;
    }
    * { box-sizing: border-box; }
    svg { display: block; }
    .title { height: 44px; background: #3c3f41; border-bottom: 2px solid #323232; display: flex; align-items: center; padding: 0 27px 0 17px; flex: none; }
    .title .name { margin-left: 17px; font-size: 17px; color: #8c8e90; padding-top: 2px; letter-spacing: 0; }
    .win { margin-left: auto; display: flex; gap: 54.5px; }
    .strip { height: 40px; background: #3c4754; border-bottom: 1px solid #2f3336; display: flex; align-items: center; padding: 0 10px 0 9px; flex: none; font-size: 17px; }
    .strip .label { width: 86px; letter-spacing: -0.2px; padding-top: 2px; }
    .tab { width: 322px; height: 40px; position: relative; display: flex; align-items: center; padding-left: 24px; letter-spacing: 0.06px; }
    .tab::after { content: ""; position: absolute; left: 0; right: 0; bottom: 0; height: 4px; border-radius: 2px; background: #4a88c7; }
    .tab .text { width: 236px; margin: 0 0 0 4px; padding-top: 2px; white-space: nowrap; }
    .tab .close { margin-left: 10px; padding-top: 2px; }
    .strip .right { margin-left: auto; display: flex; align-items: center; gap: 20px; }
    .tools { height: 44px; background: #3c3f41; border-bottom: 2px solid #313335; display: flex; align-items: center; padding: 0 8px; gap: 15px; flex: none; }
    .near { display: flex; gap: 9px; margin-right: -3px; }
    .stage { flex: 1; min-height: 0; position: relative; display: flex; justify-content: center; }
    .panel {
      position: absolute; right: 25px; bottom: 31px; width: 42px; height: 162px; border: 1px solid #3e4042; border-radius: 5px;
      background: #2b2b2b; display: flex; flex-direction: column; align-items: center; justify-content: space-between; padding: 14px 0 12px;
    }
    .ratio { font-size: 16px; font-weight: 800; line-height: 18px; color: #afb1b3; letter-spacing: -0.8px; margin-left: -1px; }
  `;

  private words = [
    "Clicked! Word 12",
    "Clicked! Word 13",
    "Word 14",
    "Word 15",
    "Clicked! Word 16",
    "Word 17",
    "Word 18",
    "Word 19",
    ...[20, 21, 22, 23, 24, 25].map((n) => `+ Word ${n}`),
  ];

  render() {
    return html`
      <div class="title">${androidHead}<span class="name">Emulator - RecyclerView</span>
        <div class="win">${winMin}${winMax}${winClose}</div>
      </div>
      <div class="strip">
        <span class="label">Emulator:</span>
        <div class="tab">${deviceIcon}<span class="text">Pixel XL API UpsideDownCake</span><span class="close">${closeTab}</span></div>
        <div class="right">${paneMode}${gear}${hide}</div>
      </div>
      <div class="tools">
        <div class="near">${power}${volUp}${volDown}</div>
        ${rotLeft}${rotRight}${back}${home}${overview}${camera}${video}${replay}${kebab}
      </div>
      <div class="stage">
        <phone-view .words=${this.words}></phone-view>
        <div class="panel">${zoomIn}${zoomOut}<span class="ratio">1:1</span>${zoomFit}</div>
      </div>
      <task-bar></task-bar>
    `;
  }
}
